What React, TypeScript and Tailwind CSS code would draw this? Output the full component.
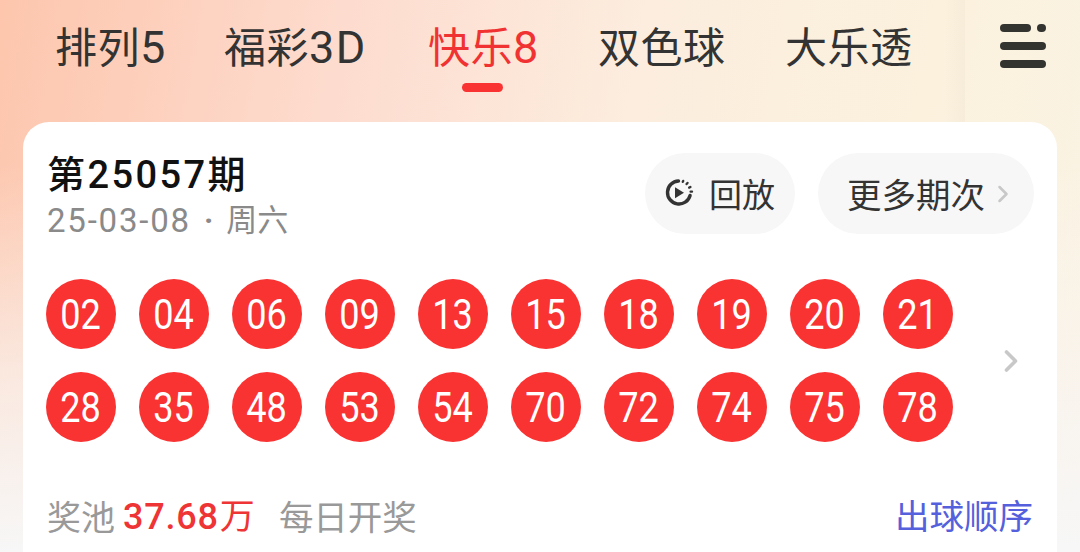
import { ChevronRight } from "lucide-react";

const CJK = "font-['Roboto','Noto_Sans_CJK_SC',sans-serif]";

const tabs = [
  { label: "排列", latin: "5", width: "w-[169px]" },
  { label: "福彩", latin: "3D", width: "w-[204px]" },
  { label: "快乐", latin: "8", width: "w-[170px]", active: true },
  { label: "双色球", latin: "", width: "w-[187px]" },
  { label: "大乐透", latin: "", width: "w-[130px]" },
];

const rows = [
  ["02", "04", "06", "09", "13", "15", "18", "19", "20", "21"],
  ["28", "35", "48", "53", "54", "70", "72", "74", "75", "78"],
];

function ReplayIcon() {
  return (
    <svg width="30" height="30" viewBox="0 0 30 30" fill="none">
      <path d="M14.5 3a11.5 11.5 0 1 0 11.6 14.5" stroke="#333" strokeWidth="3.4" strokeLinecap="round" />
      <path d="M11 9.2v11l9-5.5z" fill="#333" />
      <path d="M18.8 3.8l.4-.9M22.6 6l.9-1M25.2 9.6l1.2-.6M26.6 13.6h1.4" stroke="#333" strokeWidth="2.4" strokeLinecap="round" />
    </svg>
  );
}

function MenuIcon() {
  return (
    <div className="flex w-[46px] flex-col gap-[10px]">
      <div className="flex gap-[6px]">
        <div className="h-[8px] w-[31px] rounded-full bg-[#333330]" />
        <div className="h-[8px] w-[9px] rounded-full bg-[#333330]" />
      </div>
      <div className="h-[8px] rounded-full bg-[#333330]" />
      <div className="h-[8px] rounded-full bg-[#333330]" />
    </div>
  );
}

export default function App() {
  return (
    <div className={`h-[552px] w-[1080px] overflow-hidden bg-[linear-gradient(180deg,rgba(247,247,247,0)_0%,rgba(247,247,247,0)_30%,rgba(249,244,240,0.75)_70%,#f7f7f7_100%),linear-gradient(100deg,#fdc6ad_0%,#fddccf_30%,#fcedde_55%,#fbf1dd_80%,#faf3e4_100%)] ${CJK}`}>
      <div className="flex h-[122px]">
        <div className="flex w-[965px] pl-[55px]">
          {tabs.map((tab) => (
            <div key={tab.label} className={`${tab.width} flex flex-col`}>
              <div className={`mt-[21px] h-[54px] text-[42px] leading-[54px] tracking-[0.5px] whitespace-nowrap ${tab.active ? "text-[#f03232]" : "text-[#333333]"}`}>
                {tab.label}
                <span className="text-[45px] tracking-[1.5px]">{tab.latin}</span>
              </div>
              {tab.active && <div className="mt-[8px] ml-[34px] h-[9px] w-[41px] rounded-full bg-[#f93232]" />}
            </div>
          ))}
        </div>
        <div className="relative flex flex-1 justify-center pt-[24px]">
          <div className="absolute top-0 -left-[20px] h-[122px] w-[20px] bg-[linear-gradient(90deg,rgba(235,225,205,0)_0%,rgba(235,225,205,0.3)_100%)]" />
          <MenuIcon />
        </div>
      </div>

      <div className="mx-[23px] h-[430px] rounded-t-[26px] bg-white">
        <div className="flex justify-between pt-[31px] pr-[23px] pl-[24px]">
          <div>
            <div className="text-[38px] leading-[44px] font-medium tracking-[2.4px] text-[#111111]">第25057期</div>
            <div className="mt-[5px] flex items-center text-[31px] leading-[38px] text-[#8a8a8a]">
              <span className="text-[33px] tracking-[1.8px]">25-03-08</span>
              <span className="mx-[13px] font-bold">·</span>
              <span>周六</span>
            </div>
          </div>
          <div className="flex gap-[23px]">
            <div className="flex h-[81px] w-[150px] items-center rounded-full bg-[#f7f7f7] pl-[19px]">
              <div className="mb-[1px]">
                <ReplayIcon />
              </div>
              <span className="mt-[5px] ml-[15px] text-[33px] text-[#333333]">回放</span>
            </div>
            <div className="flex h-[81px] w-[216px] items-center rounded-full bg-[#f7f7f7] pl-[29px]">
              <span className="mt-[6px] text-[34.5px] text-[#333333]">更多期次</span>
              <ChevronRight className="ml-[4px] h-[28px] w-[28px] text-[#c8c8c8]" strokeWidth={2.2} />
            </div>
          </div>
        </div>

        <div className="mt-[39px] flex items-center pr-[28px] pl-[23px]">
          <div className="flex flex-col gap-[23px]">
            {rows.map((row) => (
              <div key={row[0]} className="flex gap-[23px]">
                {row.map((n) => (
                  <div key={n} className="flex h-[70px] w-[70px] items-center justify-center rounded-full bg-[#f93232] text-[42px] text-white">
                    <span className="scale-x-[0.86]">{n}</span>
                  </div>
                ))}
              </div>
            ))}
          </div>
          <ChevronRight className="ml-auto h-[36px] w-[36px] text-[#c8c8c8]" strokeWidth={2.4} />
        </div>

        <div className="mt-[45px] flex items-center justify-between pr-[24px] pl-[24px]">
          <div className="flex items-center text-[34px] leading-[60px] text-[#999999]">
            <span>奖池</span>
            <span className="ml-[8px] text-[#ee3434]">
              <span className="text-[36px] font-medium tracking-[0.8px]">37.68</span>
              <span className="ml-[1px] text-[35px]">万</span>
            </span>
            <span className="ml-[24px] text-[34.5px]">每日开奖</span>
          </div>
          <span className="text-[34.5px] text-[#5560dc]">出球顺序</span>
        </div>
      </div>
    </div>
  );
}
